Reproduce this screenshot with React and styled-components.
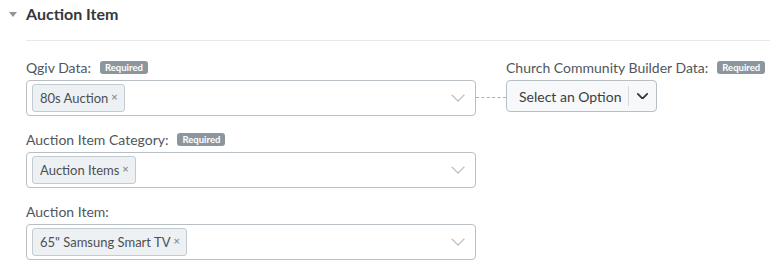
import styled, { createGlobalStyle } from 'styled-components';

const GlobalStyle = createGlobalStyle`
  body {
    margin: 0;
    background: #fff;
    font-family: Lato, "Liberation Sans", sans-serif;
    color: #4a4f54;
  }
`;

const Section = styled.section`
  width: 770px;
  height: 270px;
  overflow: hidden;
`;

const Header = styled.div`
  display: flex;
  align-items: center;
  height: 28px;
  padding-left: 9px;
  gap: 9px;
`;

const Caret = styled.span`
  width: 0;
  height: 0;
  border-left: 4px solid transparent;
  border-right: 4px solid transparent;
  border-top: 5px solid #8e979d;
`;

const Title = styled.h2`
  margin: 0 0 2px;
  font-size: 16px;
  font-weight: 700;
  color: #33383c;
`;

const Divider = styled.hr`
  margin: 12px 0 0 26px;
  border: none;
  border-top: 1px solid #e6e8ea;
`;

const Body = styled.div`
  display: flex;
  flex-direction: column;
  gap: 14px;
  padding: 17px 0 0 26px;
`;

const Row = styled.div`
  display: flex;
  align-items: flex-start;
`;

const Field = styled.div`
  display: flex;
  flex-direction: column;
  gap: 4px;
  width: ${({ $width }) => $width || 'auto'};
`;

const LabelRow = styled.div`
  display: flex;
  align-items: center;
  gap: 9px;
  height: 18px;
  font-size: 14px;
  color: #50565b;
`;

const Badge = styled.span`
  background: #8b969d;
  color: #fff;
  font-size: 9.5px;
  font-weight: 700;
  line-height: 13px;
  padding: 0 5px;
  border-radius: 3px;
`;

const MultiSelect = styled.div`
  box-sizing: border-box;
  display: flex;
  align-items: center;
  height: 36px;
  padding: 3px 10px 3px 5px;
  border: 1px solid #b8bfc4;
  border-radius: 4px;
  background: #fff;
`;

const Tags = styled.div`
  flex: 1;
  display: flex;
  gap: 4px;
`;

const Tag = styled.span`
  box-sizing: border-box;
  display: inline-flex;
  align-items: center;
  gap: 3px;
  height: 28px;
  padding: 0 6px 0 7px;
  border: 1px solid #c4cbd0;
  border-radius: 3px;
  background: #eef1f3;
  font-size: 13px;
  color: #4a4f54;
`;

const Remove = styled.span`
  font-size: 11px;
  font-weight: 700;
  color: #8b959c;
  margin-top: -3px;
`;

const Connector = styled.div`
  width: 30px;
  height: 0;
  margin-top: 39px;
  border-top: 1px dashed #a9b0b5;
`;

const Dropdown = styled.div`
  box-sizing: border-box;
  display: flex;
  align-items: center;
  width: 151px;
  height: 32px;
  border: 1px solid #b8bfc4;
  border-radius: 4px;
  background: #f6f8f9;
  font-size: 14px;
  color: #3a3f43;
`;

const DropdownText = styled.span`
  flex: 1;
  padding-left: 12px;
  white-space: nowrap;
`;

const DropdownToggle = styled.span`
  display: flex;
  align-items: center;
  justify-content: center;
  width: 27px;
  height: 20px;
  border-left: 1px solid #d4d9dc;
`;

const Chevron = ({ color = '#b3bac0', width = 1.2, size = 14 }) => (
  <svg width={size} height={size * 0.6} viewBox="0 0 14 8" fill="none">
    <path d="M1 1l6 6 6-6" stroke={color} strokeWidth={width} strokeLinecap="round" strokeLinejoin="round" />
  </svg>
);

const Label = ({ text, required }) => (
  <LabelRow>
    <span>{text}</span>
    {required && <Badge>Required</Badge>}
  </LabelRow>
);

const TagSelect = ({ tags }) => (
  <MultiSelect>
    <Tags>
      {tags.map((t) => (
        <Tag key={t}>
          {t}
          <Remove>×</Remove>
        </Tag>
      ))}
    </Tags>
    <Chevron />
  </MultiSelect>
);

export default function App() {
  return (
    <>
      <GlobalStyle />
      <Section>
        <Header>
          <Caret />
          <Title>Auction Item</Title>
        </Header>
        <Divider />
        <Body>
          <Row>
            <Field $width="450px">
              <Label text="Qgiv Data:" required />
              <TagSelect tags={['80s Auction']} />
            </Field>
            <Connector />
            <Field>
              <Label text="Church Community Builder Data:" required />
              <Dropdown>
                <DropdownText>Select an Option</DropdownText>
                <DropdownToggle>
                  <Chevron color="#2f3438" width={2.2} size={11} />
                </DropdownToggle>
              </Dropdown>
            </Field>
          </Row>
          <Field $width="450px">
            <Label text="Auction Item Category:" required />
            <TagSelect tags={['Auction Items']} />
          </Field>
          <Field $width="450px">
            <Label text="Auction Item:" />
            <TagSelect tags={['65" Samsung Smart TV']} />
          </Field>
        </Body>
      </Section>
    </>
  );
}
